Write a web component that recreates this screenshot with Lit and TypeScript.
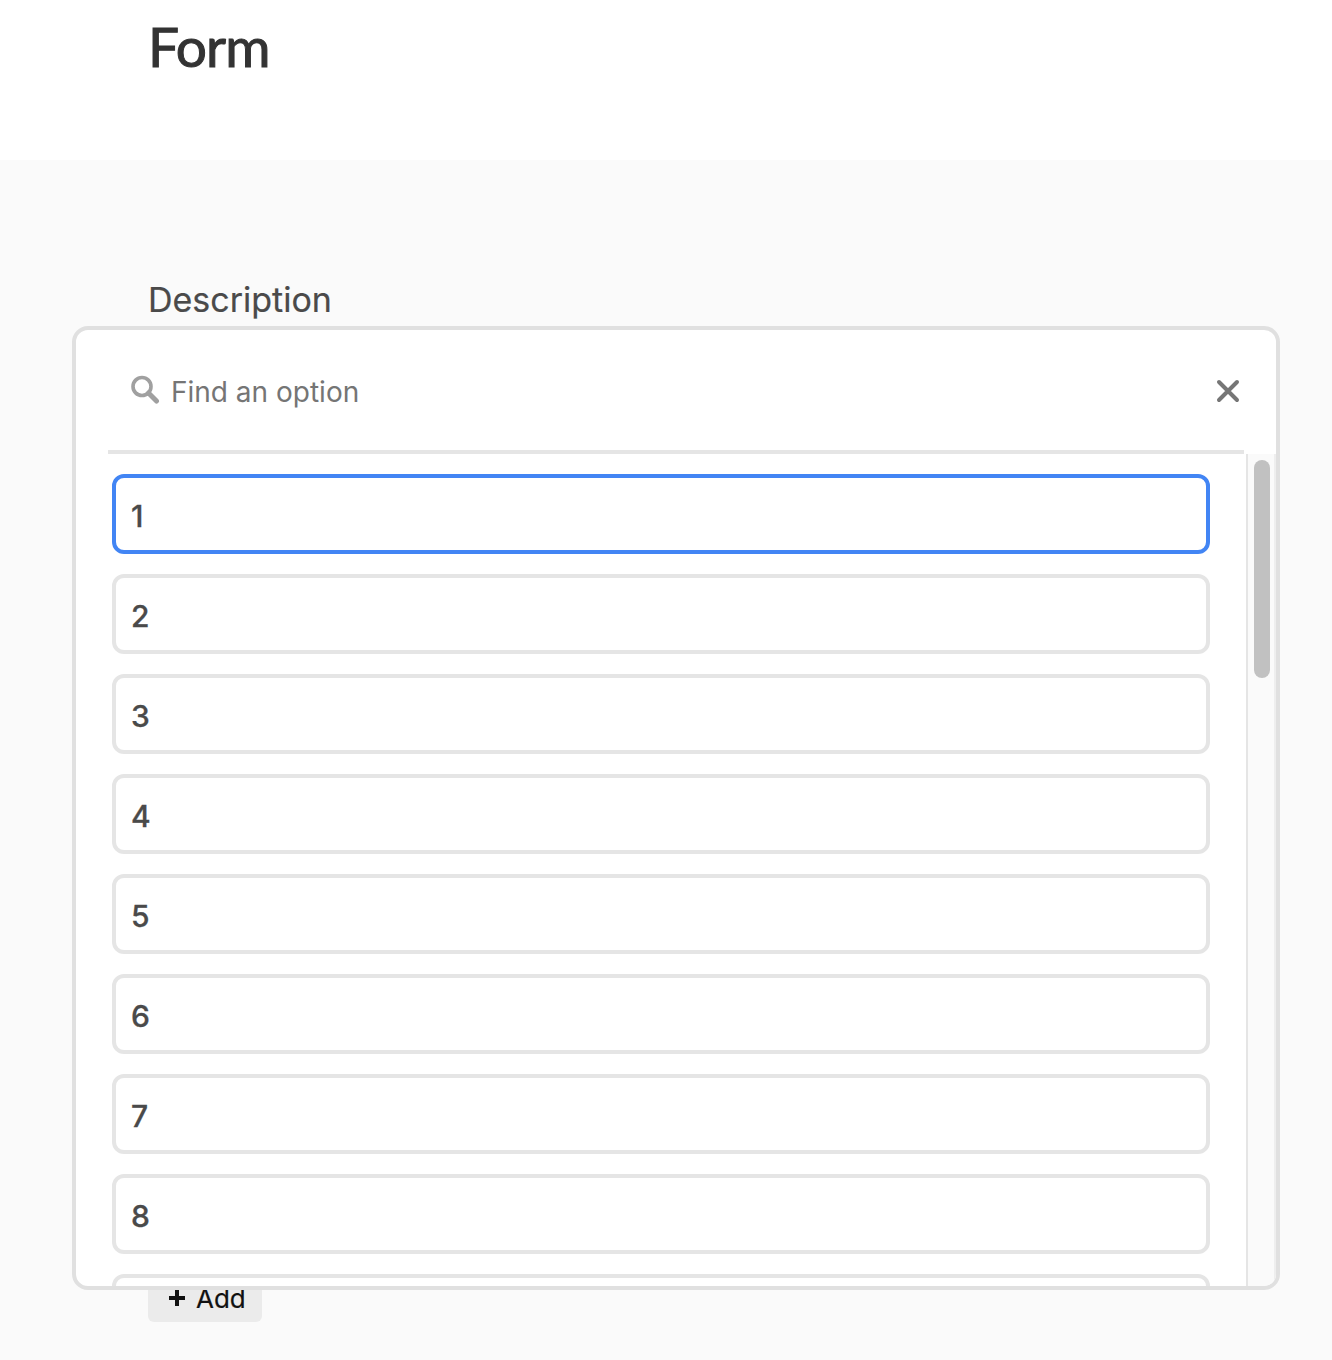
import { LitElement, html, css } from "lit";
import { customElement } from "lit/decorators.js";

const OPTIONS = ["1", "2", "3", "4", "5", "6", "7", "8", "9"];

@customElement("app-root")
export class AppRoot extends LitElement {
  static styles = css`
    :host {
      display: block;
      width: 1332px;
      height: 1360px;
      overflow: hidden;
      background: #fafafa;
      font-family: Inter, "Liberation Sans", sans-serif;
      color: #4a4a4a;
    }
    .header {
      height: 160px;
      background: #fff;
      padding-left: 148px;
      box-sizing: border-box;
    }
    h1 {
      margin: 0;
      padding-top: 10px;
      font-family: Lato, sans-serif;
      font-size: 55px;
      line-height: 72px;
      font-weight: 400;
      letter-spacing: -0.9px;
      -webkit-text-stroke: 1px #333;
      color: #333;
    }
    .main {
      padding: 117px 0 0 148px;
    }
    .label {
      font-size: 34px;
      line-height: 46px;
      color: #4a4a4a;
      -webkit-text-stroke: 0.2px #4a4a4a;
    }
    .field {
      position: relative;
      height: 964px;
      margin-top: 3px;
    }
    .add {
      display: flex;
      align-items: center;
      gap: 10px;
      box-sizing: border-box;
      width: 114px;
      height: 56px;
      margin-top: -24px;
      padding: 8px 0 0 20px;
      border-radius: 6px;
      background: #ebebeb;
      color: #111;
      font-size: 26px;
      -webkit-text-stroke: 0.2px #111;
    }
    .add svg { display: block; }
    .panel {
      position: absolute;
      left: -76px;
      top: 0;
      width: 1208px;
      height: 964px;
      box-sizing: border-box;
      border: 4px solid #e0e0e0;
      border-radius: 16px;
      background: #fff;
      display: flex;
      flex-direction: column;
      overflow: hidden;
      z-index: 1;
    }
    .search {
      flex: none;
      height: 120px;
      box-sizing: border-box;
      display: flex;
      align-items: center;
      gap: 11px;
      padding: 0 36px 0 54px;
      font-size: 28px;
      color: #757575;
    }
    .search .ph { flex: 1; padding-top: 4px; }
    .search svg { display: block; }
    .search .close { margin-top: 2px; }
    .divider {
      flex: none;
      height: 4px;
      margin: 0 32px;
      background: #e5e5e5;
    }
    .body {
      flex: 1;
      min-height: 0;
      display: flex;
    }
    .list {
      flex: 1;
      min-width: 0;
      padding: 20px 36px 0;
      display: flex;
      flex-direction: column;
      gap: 20px;
      overflow: hidden;
    }
    .option {
      flex: none;
      height: 80px;
      box-sizing: border-box;
      display: flex;
      align-items: center;
      padding: 4px 0 0 15px;
      border: 4px solid #e5e5e5;
      border-radius: 12px;
      background: #fff;
      font-size: 30px;
      font-weight: 500;
      -webkit-text-stroke: 0.3px #4a4a4a;
      color: #4a4a4a;
    }
    .option.active { border-color: #4285f4; }
    .track {
      flex: none;
      width: 30px;
      box-sizing: border-box;
      border-left: 2px solid #e5e5e5;
      border-right: 2px solid #eeeeee;
      background: #fafafa;
      padding: 6px 4px 0 6px;
    }
    .thumb {
      height: 218px;
      border-radius: 8px;
      background: #c1c1c1;
    }
  `;

  render() {
    return html`
      <div class="header"><h1>Form</h1></div>
      <div class="main">
        <div class="label">Description</div>
        <div class="field">
          <div class="panel">
            <div class="search">
              <svg width="30" height="30" viewBox="0 0 30 30" fill="none" stroke="#a0a0a0">
                <circle cx="12" cy="11.5" r="9" stroke-width="3.6"></circle>
                <path d="M18.5 18l8 8" stroke-width="5" stroke-linecap="round"></path>
              </svg>
              <span class="ph">Find an option</span>
              <svg class="close" width="24" height="24" viewBox="0 0 24 24" fill="none" stroke="#767676" stroke-width="4" stroke-linecap="round">
                <path d="M3 3l18 18M21 3L3 21"></path>
              </svg>
            </div>
            <div class="divider"></div>
            <div class="body">
              <div class="list">
                ${OPTIONS.map((o, i) => html`<div class="option ${i === 0 ? "active" : ""}">${o}</div>`)}
              </div>
              <div class="track"><div class="thumb"></div></div>
            </div>
          </div>
        </div>
        <div class="add">
          <svg width="18" height="18" viewBox="0 0 18 18" stroke="#111" stroke-width="4"><path d="M9 1v16M1 9h16"></path></svg>
          <span>Add</span>
        </div>
      </div>
    `;
  }
}
